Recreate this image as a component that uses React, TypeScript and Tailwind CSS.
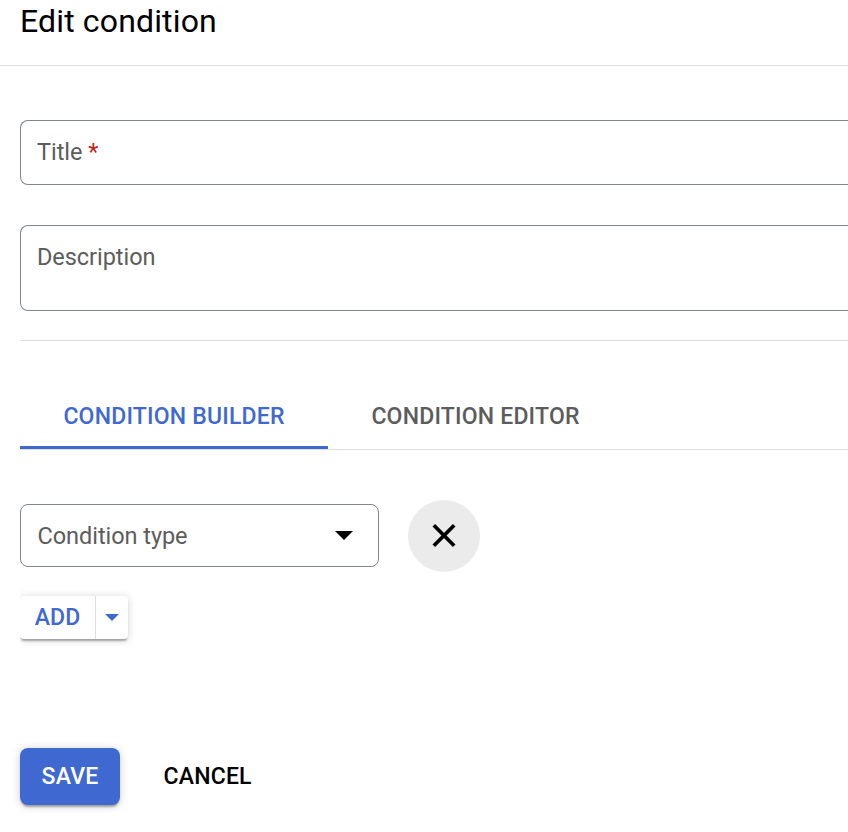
import React from "react";

function Field({ children, className }: { children: React.ReactNode; className: string }) {
  return (
    <div className={`ml-5 rounded-l-lg border border-r-0 border-[#80868b] pl-4 text-[23.5px] leading-8 tracking-[-0.05px] text-[#5c5c5c] ${className}`}>
      {children}
    </div>
  );
}

export default function App() {
  return (
    <div className="h-[832px] w-[848px] overflow-hidden bg-white font-[Roboto,sans-serif] text-black">
      <header className="h-[66px] border-b border-[#dedede] pt-px pl-5">
        <h1 className="text-[32px] leading-10 tracking-[0.15px]">Edit condition</h1>
      </header>
      <Field className="mt-[54px] h-[65px] pt-[15px]">
        Title <span className="text-[#c5221f]">*</span>
      </Field>
      <Field className="mt-10 h-[86px] pt-[15px]">Description</Field>
      <div className="mt-[29px] ml-5 border-t border-[#dedede]" />
      <nav className="mt-[42px] ml-5 flex h-[67px] border-b border-[#dedede] text-[23px] leading-8 font-medium tracking-[0.2px]">
        <div className="h-[66px] w-[308px] border-b-[3px] border-[#3f69d1] pt-[18px] text-center text-[#3f69d1]">CONDITION BUILDER</div>
        <div className="w-[295px] pt-[18px] text-center text-[#5c5c5c]">CONDITION EDITOR</div>
      </nav>
      <div className="mt-[50px] ml-5 flex h-[72px] items-start">
        <div className="mt-1 flex h-[63px] w-[359px] items-center justify-between rounded-lg border border-[#80868b] pr-[25px] pl-[16.5px] text-[23.5px] tracking-[-0.05px] text-[#5c5c5c]">
          <span className="pt-0.5">Condition type</span>
          <svg className="mb-px" width="18" height="9" viewBox="0 0 18 9"><path d="M0 0h18L9 9z" /></svg>
        </div>
        <button className="ml-[29px] flex size-[72px] items-center justify-center rounded-full bg-[#ebebeb]">
          <svg className="mb-px" width="24" height="24" viewBox="0 0 24 24" fill="none" stroke="black" strokeWidth="3.7"><path d="M1.8 1.3l20.4 20.4M22.2 1.3L1.8 21.7" /></svg>
        </button>
      </div>
      <div className="mt-6 ml-5 flex h-[43px] w-[108px] rounded-[4px] bg-white text-[23px] font-medium text-[#3f69d1] shadow-[0_3px_2px_-1px_rgba(0,0,0,0.3),0_1px_8px_rgba(0,0,0,0.18)] [clip-path:inset(-10px_-10px_-12px_0)]">
        <button className="w-[76px] border-r border-[#dedede] pt-0.5 tracking-[0.1px]">ADD</button>
        <button className="flex flex-1 items-center justify-center">
          <svg className="mb-px" width="14" height="7" viewBox="0 0 14 7" fill="currentColor"><path d="M0 0h14L7 7z" /></svg>
        </button>
      </div>
      <div className="mt-[109px] ml-5 flex h-[57px] text-[23px] font-medium tracking-[0.2px]">
        <button className="w-[100px] rounded-lg bg-[#3f69d1] pt-0.5 text-white shadow-[0_3px_2px_-1px_rgba(0,0,0,0.3),0_1px_8px_rgba(0,0,0,0.2)]">SAVE</button>
        <button className="ml-[43.5px] pt-0.5">CANCEL</button>
      </div>
    </div>
  );
}
